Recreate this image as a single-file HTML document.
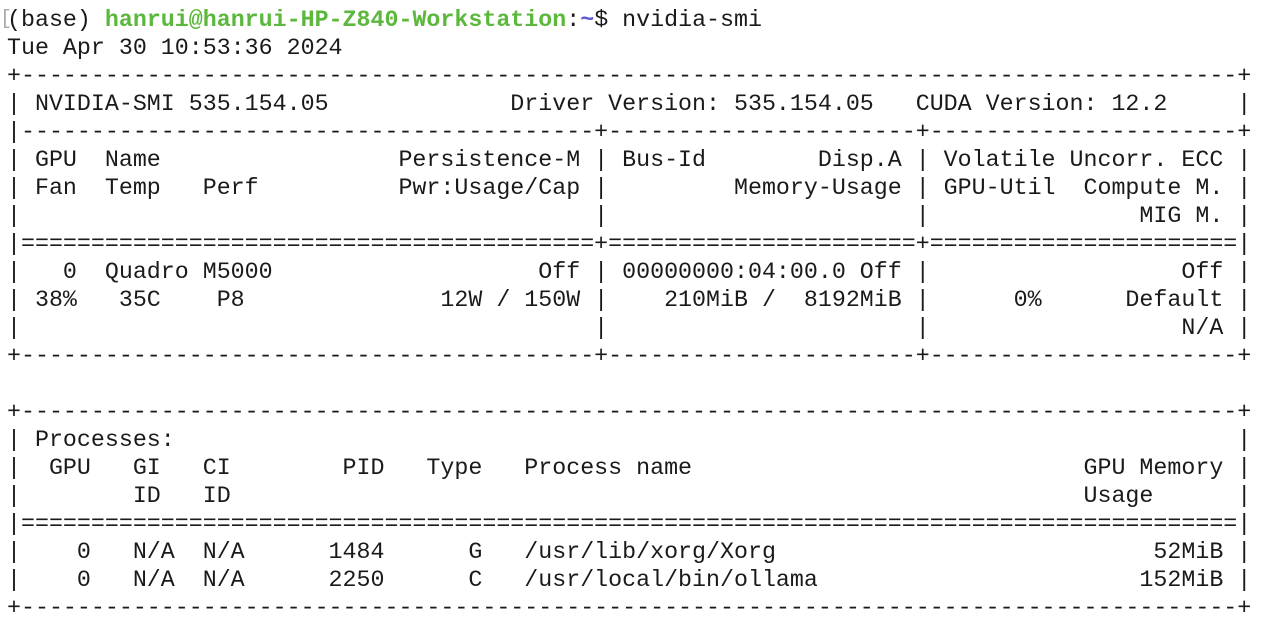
<!DOCTYPE html>
<html><head><meta charset="utf-8"><style>
html,body{margin:0;padding:0;background:#fff;width:1276px;height:622px;overflow:hidden}
pre{margin:0;padding:6px 0 0 7px;font-family:"Liberation Mono",monospace;font-size:23.3px;line-height:28px;color:#1a1a1a}
.g{color:#5cb83c;font-weight:bold}.b{color:#5b5bd6;font-weight:bold}.gr{color:#aaa;position:absolute;left:0;top:6px;font-family:"Liberation Mono",monospace;font-size:20px;line-height:28px}
</style></head><body><span class="gr">[</span><pre>(base) <span class="g">hanrui@hanrui-HP-Z840-Workstation</span>:<span class="b">~</span>$ nvidia-smi
Tue Apr 30 10:53:36 2024
+---------------------------------------------------------------------------------------+
| NVIDIA-SMI 535.154.05             Driver Version: 535.154.05   CUDA Version: 12.2     |
|-----------------------------------------+----------------------+----------------------+
| GPU  Name                 Persistence-M | Bus-Id        Disp.A | Volatile Uncorr. ECC |
| Fan  Temp   Perf          Pwr:Usage/Cap |         Memory-Usage | GPU-Util  Compute M. |
|                                         |                      |               MIG M. |
|=========================================+======================+======================|
|   0  Quadro M5000                   Off | 00000000:04:00.0 Off |                  Off |
| 38%   35C    P8              12W / 150W |    210MiB /  8192MiB |      0%      Default |
|                                         |                      |                  N/A |
+-----------------------------------------+----------------------+----------------------+
                                                                                         
+---------------------------------------------------------------------------------------+
| Processes:                                                                            |
|  GPU   GI   CI        PID   Type   Process name                            GPU Memory |
|        ID   ID                                                             Usage      |
|=======================================================================================|
|    0   N/A  N/A      1484      G   /usr/lib/xorg/Xorg                           52MiB |
|    0   N/A  N/A      2250      C   /usr/local/bin/ollama                       152MiB |
+---------------------------------------------------------------------------------------+</pre></body></html>
